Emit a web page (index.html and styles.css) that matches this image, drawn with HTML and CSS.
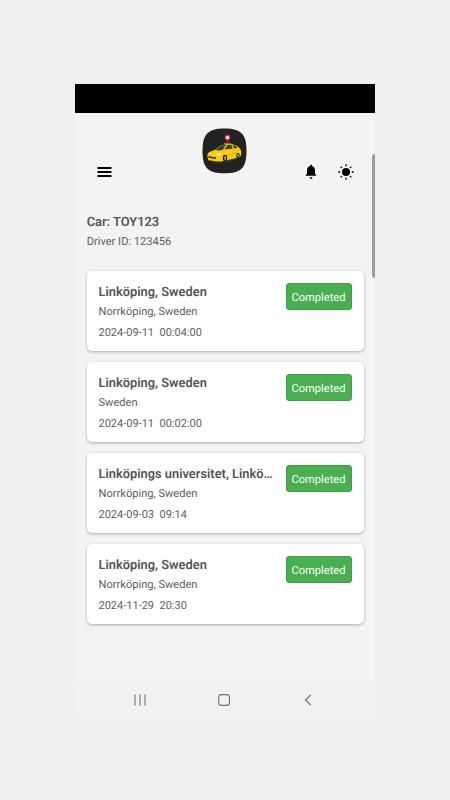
FILE: index.html
```html
<!DOCTYPE html>
<html lang="en">
<head>
<meta charset="utf-8">
<title>Driver trips</title>
<link rel="stylesheet" href="styles.css">
</head>
<body>
<main class="phone">
  <div class="status-bar"></div>
  <div class="scroll-thumb"></div>
  <header class="header">
    <svg class="menu" viewBox="0 0 14 10"><path d="M0 1h14M0 5h14M0 9h14" stroke="#000" stroke-width="1.8"/></svg>
    <svg class="logo" viewBox="0 0 45 46">
      <path d="M22.500.5C39 .5 44.500 6 44.500 23S39 45.300 22.500 45.300.5 40 .5 23 6 .5 22.500.5Z" fill="#222"/>
      <path d="M6 33l9 1.500 14-1.500 8-3-6-1-25 1z" fill="#3b3b3b"/>
      <path d="M5.300 27.500c.2-2.700 3-4.500 7.500-5.500 4-3.500 8-6 14-6 5.500 0 9 1.500 11 4.500 1.500 2 2 4 1.300 6.500l-1.600 2.500-3.500.5-8 2-7 1.500-6-.2-6.700-1.300z" fill="#fc0"/>
      <path d="M13.500 21.800c3.500-3 6.500-4.700 10.500-5L20.700 22c-2.700.6-5 .5-7.200-.2z" fill="#29434c"/>
      <path d="M22.200 21.500l3.300-4.500h4l1 3.700zM31 17c2 .2 3.500 1.200 4.700 2.900l-4 .6z" fill="#33434a"/>
      <path d="M21 28l14-3M30.500 17l.8 8.500" fill="none" stroke="#c79a0b" stroke-width=".5"/>
      <path d="M6 28.200l8 1v1.900l-7.500-1.300z" fill="#343114"/>
      <path d="M14.500 26l5-1.400-1.200 2.500-3.800.5zM6.500 25.200l2-.9-.7 1.700z" fill="#fff6cd"/>
      <ellipse cx="23" cy="30" rx="2.200" ry="3.200" fill="#171717"/>
      <ellipse cx="23.200" cy="30" rx="1.200" ry="2.100" fill="#999"/>
      <ellipse cx="36" cy="27.500" rx="1.700" ry="2.800" fill="#171717"/>
      <ellipse cx="36" cy="27.500" rx=".9" ry="1.800" fill="#999"/>
      <path d="M22 14.800h7v1.400h-7z" fill="#a27908"/>
      <path d="M25.500 15.500l-1.800-4h3.600z" fill="#a91b29"/>
      <circle cx="25.500" cy="9.500" r="2.200" fill="#fff" stroke="#e2354a" stroke-width="1.200"/>
    </svg>
    <svg class="bell" viewBox="0 0 12 16"><path d="M6 .8c.7 0 1.100.5 1.100 1.200C9.300 2.600 10 4.500 10 6.500v3.300l1.200 1.300v.7H.8v-.7L2 9.800V6.500C2 4.500 2.700 2.600 4.900 2 4.900 1.300 5.300.8 6 .8zM4.500 13.300h3c0 .9-.6 1.500-1.500 1.500s-1.500-.6-1.500-1.500z"/></svg>
    <svg class="sun" viewBox="0 0 16 16"><circle cx="8" cy="8" r="4"/><path d="M8 .3v1.900M8 13.800v1.900M.3 8h1.900M13.800 8h1.900M2.600 2.600l1.300 1.300M12.100 12.100l1.300 1.300M2.600 13.400l1.300-1.300M12.100 3.900l1.300-1.300" stroke="#000" stroke-width="1.300"/></svg>
  </header>
  <section class="driver">
    <h1>Car: TOY123</h1>
    <p>Driver ID: 123456</p>
  </section>
  <section class="trips">
    <article class="card">
      <div class="trip"><h2>Linköping, Sweden</h2><p>Norrköping, Sweden</p><p class="date">2024-09-11&nbsp; 00:04:00</p></div>
      <span class="badge">Completed</span>
    </article>
    <article class="card">
      <div class="trip"><h2>Linköping, Sweden</h2><p>Sweden</p><p class="date">2024-09-11&nbsp; 00:02:00</p></div>
      <span class="badge">Completed</span>
    </article>
    <article class="card">
      <div class="trip"><h2>Linköpings universitet, Linkö…</h2><p>Norrköping, Sweden</p><p class="date">2024-09-03&nbsp; 09:14</p></div>
      <span class="badge">Completed</span>
    </article>
    <article class="card">
      <div class="trip"><h2>Linköping, Sweden</h2><p>Norrköping, Sweden</p><p class="date">2024-11-29&nbsp; 20:30</p></div>
      <span class="badge">Completed</span>
    </article>
  </section>
  <nav class="nav">
    <svg viewBox="0 0 14 14"><path d="M2 1.500v11M7 1.500v11M12 1.500v11"/></svg>
    <svg viewBox="0 0 14 14"><rect x="1.700" y="1.600" width="10.800" height="10.800" rx="3"/></svg>
    <svg viewBox="0 0 14 14"><path d="M9.700 2L4.500 7l5.200 5"/></svg>
  </nav>
</main>
</body>
</html>
```
FILE: styles.css
```css
* { box-sizing: border-box; }
body {
  margin: 0;
  height: 800px;
  padding-top: 83.500px;
  background: #f0f0f0;
  color: #555;
  font-family: Roboto, "Liberation Sans", sans-serif;
  text-rendering: geometricPrecision;
}
h1, h2, p { margin: 0; }
.phone {
  position: relative;
  display: flex;
  flex-direction: column;
  width: 300px;
  height: 633px;
  margin: 0 auto;
  background: #f3f3f3;
}
.status-bar { height: 29.500px; background: #000; }
.scroll-thumb {
  position: absolute;
  top: 70px;
  right: 0;
  width: 3px;
  height: 124px;
  border-radius: 3px 0 0 3px;
  background: #9b9b9b;
}
.header {
  display: grid;
  grid-template-columns: 105px 1fr 12px 16px;
  align-items: start;
  height: 101px;
  padding: 15px 21px 0 22px;
}
.menu { width: 15px; height: 10px; margin-top: 39px; }
.logo { width: 45px; height: 46px; }
.bell { width: 12px; height: 16px; margin-top: 36px; margin-left: -21px; }
.sun { width: 16px; height: 16px; margin-top: 36px; }
.driver { height: 57px; padding-left: 11.700px; }
h1, h2 {
  font-size: 12.850px;
  line-height: 18px;
  font-weight: 600;
}
p {
  color: #606060;
  font-size: 11.100px;
  line-height: 18px;
}
.driver p { margin-top: 1px; }
.trips {
  display: flex;
  flex-direction: column;
  gap: 11.600px;
  padding: 0 11.500px;
}
.card {
  display: flex;
  justify-content: space-between;
  height: 79.500px;
  padding: 12px 12px 0;
  border-radius: 5px;
  background: #fff;
  box-shadow: 0 1px 3px #0000004d;
}
.trip { padding-top: 1px; white-space: nowrap; }
.trip p { margin-top: 1px; }
.trip .date { margin-top: 3px; font-size: 11px; }
.badge {
  width: 66px;
  height: 27px;
  border: 1px solid #3d9f42;
  border-radius: 3px;
  background: #4aaf50;
  color: #fff;
  font-size: 11.100px;
  line-height: 27px;
  text-align: center;
}
.nav {
  display: flex;
  justify-content: space-between;
  align-items: center;
  height: 34.500px;
  margin-top: auto;
  padding: 1px 60px 0 58px;
  background: #f1f1f1;
}
.nav svg {
  width: 14px;
  height: 14px;
  fill: none;
  stroke: #707070;
  stroke-width: 1.100;
}
```
